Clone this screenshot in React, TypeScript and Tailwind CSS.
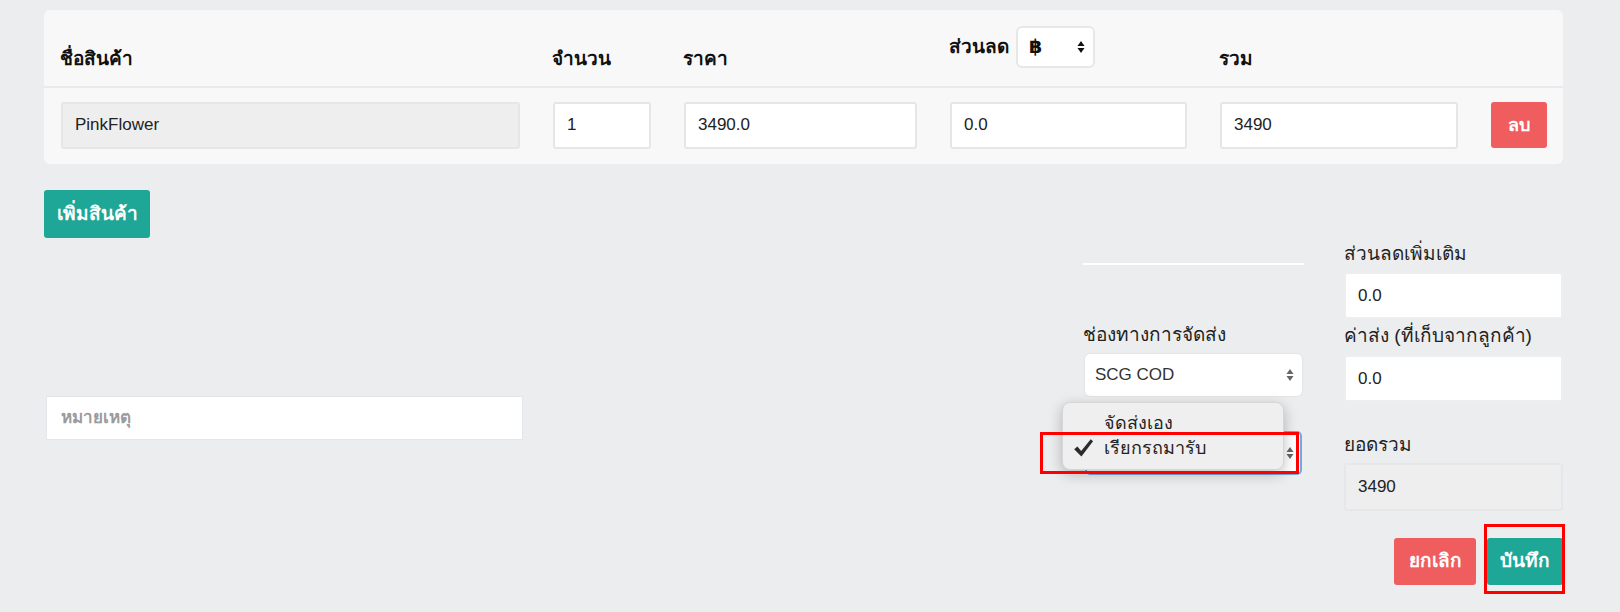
import React from "react";

const font = "font-['Liberation_Sans','Noto_Sans','DejaVu_Sans',sans-serif]";

function Arrows({ className = "" }: { className?: string }) {
  return (
    <svg width="8" height="14" viewBox="0 0 8 14" className={className}>
      <path d="M4 1 L7.5 6 L0.5 6 Z" fill="currentColor" />
      <path d="M4 13 L7.5 8 L0.5 8 Z" fill="currentColor" />
    </svg>
  );
}

function TextInput({ value, className = "" }: { value: string; className?: string }) {
  return (
    <div
      className={`h-[47px] flex items-center pl-[12px] pr-4 border-2 border-[#e4e6e9] rounded-[3px] text-[17px] text-[#222] ${className}`}
    >
      {value}
    </div>
  );
}

export default function App() {
  return (
    <div className={`w-[1620px] h-[612px] bg-[#ecedef] pt-[10px] pl-[44px] ${font}`}>
      {/* Product table */}
      <div className="w-[1519px] bg-[#f8f8f8] rounded-[6px]">
        <div className="h-[78px] flex items-end gap-[33px] pl-[16px] pb-[14px] border-b-2 border-[#e8eaed] text-[19px] font-bold text-[#111]">
          <div className="w-[459px] leading-[26px]">ชื่อสินค้า</div>
          <div className="w-[98px] leading-[26px]">จำนวน</div>
          <div className="w-[233px] leading-[26px]">ราคา</div>
          <div className="w-[237px] flex items-center gap-[7px] mb-[4px]">
            <span className="leading-[26px]">ส่วนลด</span>
            <div className="w-[79px] h-[42px] bg-white border-2 border-[#e6e7ea] rounded-[6px] flex items-center justify-between pl-[11px] pr-[8px] font-bold text-[19px]">
              <span>฿</span>
              <Arrows className="text-[#111]" />
            </div>
          </div>
          <div className="w-[238px] leading-[26px]">รวม</div>
        </div>
        <div className="h-[76px] flex items-center gap-[33px] pl-[17px] pb-[2px]">
          <TextInput value="PinkFlower" className="w-[459px] bg-[#eeeeee]" />
          <TextInput value="1" className="w-[98px] bg-white" />
          <TextInput value="3490.0" className="w-[233px] bg-white" />
          <TextInput value="0.0" className="w-[237px] bg-white" />
          <TextInput value="3490" className="w-[238px] bg-white" />
          <button className="w-[56px] h-[46px] bg-[#f05d5f] rounded-[3px] text-white font-bold text-[18px]">
            ลบ
          </button>
        </div>
      </div>

      <button className="mt-[26px] w-[106px] h-[48px] bg-[#1ea697] rounded-[3px] text-white font-bold text-[19px]">
        เพิ่มสินค้า
      </button>

      {/* Lower form */}
      <div className="mt-[3px] flex text-[19px] text-[#222]">
        <div className="w-[479px] pt-[155px] pl-[2px]">
          <div className="h-[44px] bg-white border border-[#e4e6e9] flex items-center px-[14px] text-[17px] font-bold text-[#9b9b9b]">
            หมายเหตุ
          </div>
        </div>

        <div className="ml-[560px] w-[221px] relative">
          <div className="mt-[22px] h-[2px] bg-white" />
          <div className="mt-[57px] leading-[26px]">ช่องทางการจัดส่ง</div>
          <div className="mt-[6px] ml-[2px] w-[217px] h-[42px] bg-white rounded-[5px] shadow-[0_0_2px_rgba(0,0,0,0.12)] flex items-center justify-between pl-[10px] pr-[8px] text-[17px] text-[#333]">
            <span>SCG COD</span>
            <Arrows className="text-[#666]" />
          </div>
          <div className="mt-[35px] ml-[2px] w-[217px] h-[44px] bg-white rounded-[5px] border-2 border-[#76a8e0] flex items-center justify-end pr-[6px]">
            <Arrows className="text-[#666]" />
          </div>

          {/* open dropdown menu */}
          <div className="absolute left-[-21px] top-[161px] w-[222px] h-[68px] bg-[#efefef] rounded-[8px] border border-[#d6d6d6] shadow-[0_4px_14px_rgba(0,0,0,0.25)] text-[18px] text-[#222]">
            <div className="h-[32px] flex items-end pl-[41px] leading-[24px]">จัดส่งเอง</div>
            <div className="h-[26px] flex items-center pl-[10px]">
              <svg width="21" height="20" viewBox="0 0 18 17" className="mr-[10px]">
                <path d="M1 9.5 L3.8 7.2 L7 11 L15.2 1 L17.2 2.8 L7.2 15.8 Z" fill="#2b2b2b" />
              </svg>
              <span>เรียกรถมารับ</span>
            </div>
          </div>
          {/* highlight box */}
          <div className="absolute left-[-43px] top-[191px] w-[259px] h-[42px] border-[3px] border-[#ff0000]" />
        </div>

        <div className="ml-[40px] w-[219px]">
          <div className="leading-[26px]">ส่วนลดเพิ่มเติม</div>
          <TextInput value="0.0" className="mt-[5px] h-[46px] bg-white border-[#eceef0]" />
          <div className="mt-[4px] leading-[26px]">ค่าส่ง (ที่เก็บจากลูกค้า)</div>
          <TextInput value="0.0" className="mt-[6px] h-[46px] bg-white border-[#eceef0]" />
          <div className="mt-[30px] leading-[26px]">ยอดรวม</div>
          <TextInput value="3490" className="mt-[5px] h-[48px] bg-[#eeeeef] border-[#e6e7ea]" />
          <div className="mt-[27px] flex justify-end gap-[11px]">
            <button className="w-[82px] h-[47px] bg-[#f05d5f] rounded-[3px] text-white font-bold text-[19px]">
              ยกเลิก
            </button>
            <div className="relative">
              <button className="w-[76px] h-[47px] bg-[#1ea697] rounded-[3px] text-white font-bold text-[19px]">
                บันทึก
              </button>
              <div className="absolute -left-[3px] -top-[14px] w-[81px] h-[70px] border-[3px] border-[#ff0000]" />
            </div>
          </div>
        </div>
      </div>
    </div>
  );
}
